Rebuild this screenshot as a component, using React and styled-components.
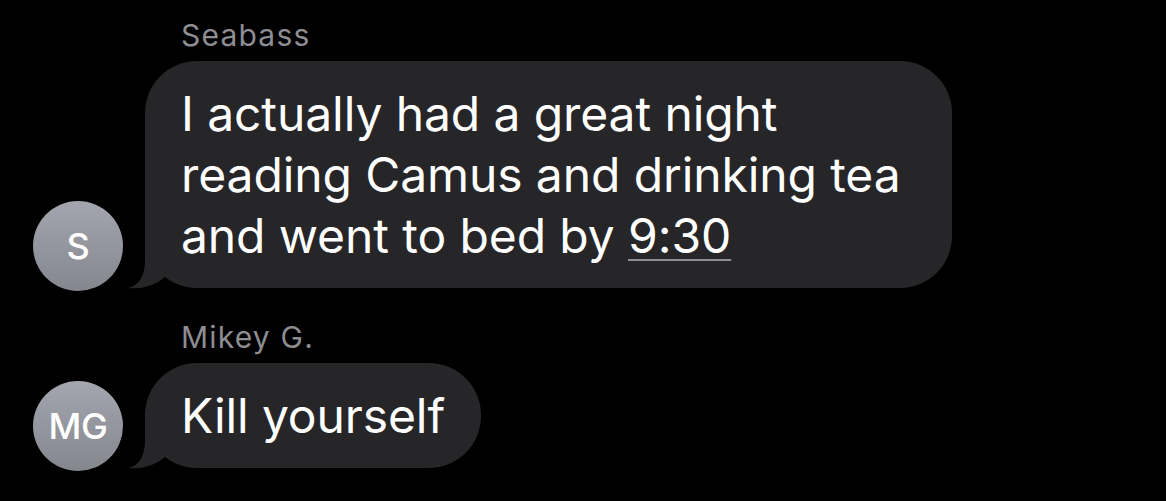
import React from "react";
import styled, { createGlobalStyle } from "styled-components";

const GlobalStyle = createGlobalStyle`
  html, body {
    margin: 0;
    padding: 0;
    background: #000;
  }
  body {
    font-family: Inter, "Noto Sans", "Liberation Sans", sans-serif;
    -webkit-font-smoothing: antialiased;
  }
`;

const Thread = styled.main`
  width: 1166px;
  height: 501px;
  box-sizing: border-box;
  padding: 18px 0 0 33px;
  display: flex;
  flex-direction: column;
  gap: 32px;
  background: #000;
  overflow: hidden;
`;

const Group = styled.section`
  display: flex;
  flex-direction: column;
`;

const Sender = styled.div`
  margin-left: 148px;
  margin-bottom: 9px;
  font-size: 30px;
  line-height: 34px;
  color: #8d8d92;
  letter-spacing: 1.2px;
`;

const Row = styled.div`
  display: flex;
  align-items: flex-end;
  gap: 22px;
`;

const Avatar = styled.div`
  flex: none;
  width: 90px;
  height: 90px;
  margin-bottom: -3px;
  border-radius: 50%;
  background: linear-gradient(180deg, #a3a6ae 0%, #84878e 100%);
  color: #fff;
  display: flex;
  align-items: center;
  justify-content: center;
  font-size: 36px;
  font-weight: 500;
  letter-spacing: -0.5px;
`;

const Bubble = styled.div`
  position: relative;
  box-sizing: border-box;
  width: fit-content;
  max-width: 807px;
  padding: 22px 36px;
  border-radius: 52px;
  background: #262628;
  color: #fff;
  font-size: 48px;
  line-height: 61px;
  letter-spacing: -0.1px;
`;

const TailShape = styled.svg`
  position: absolute;
  left: -17px;
  bottom: 0;
  width: 45px;
  height: 58px;
  overflow: visible;
`;

const Time = styled.span`
  text-decoration: underline;
  text-decoration-color: #8e8e93;
  text-decoration-thickness: 2px;
  text-underline-offset: 6px;
`;

const Tail = () => (
  <TailShape viewBox="0 0 45 58" aria-hidden="true">
    <path d="M17 0 L17 30 Q17 54 0 58 Q22 60 37 47 L44 0 Z" fill="#262628" />
  </TailShape>
);

const Message = ({ sender, initials, children }) => (
  <Group>
    <Sender>{sender}</Sender>
    <Row>
      <Avatar>{initials}</Avatar>
      <Bubble>
        <Tail />
        {children}
      </Bubble>
    </Row>
  </Group>
);

export default function App() {
  return (
    <>
      <GlobalStyle />
      <Thread>
        <Message sender="Seabass" initials="S">
          I actually had a great night reading Camus and drinking tea and went
          to bed by <Time>9:30</Time>
        </Message>
        <Message sender="Mikey G." initials="MG">
          Kill yourself
        </Message>
      </Thread>
    </>
  );
}
